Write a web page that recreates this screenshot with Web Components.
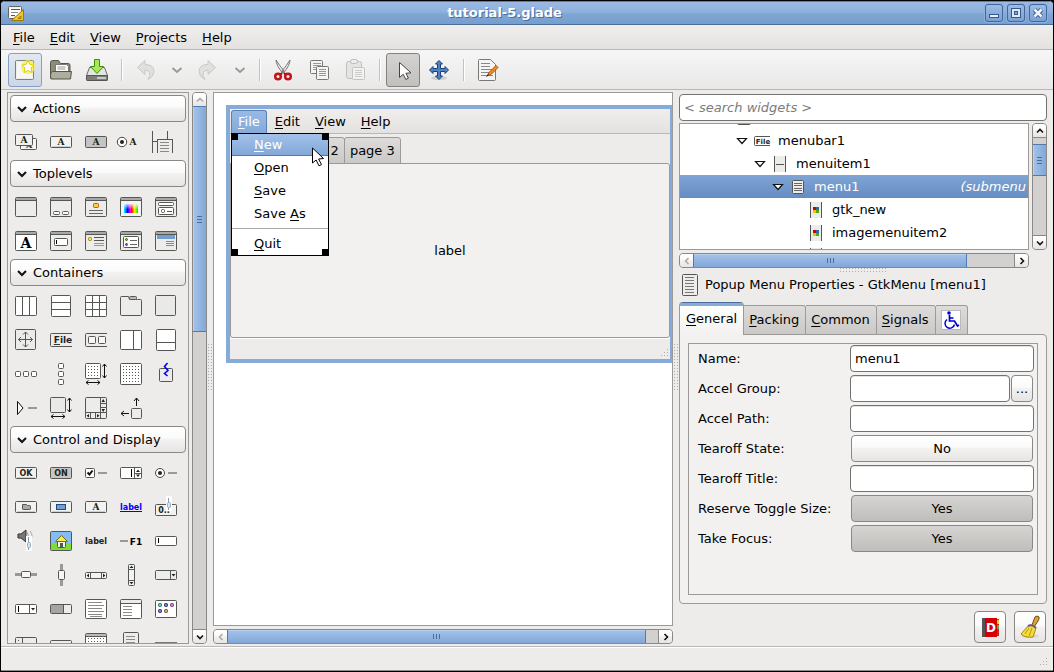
<!DOCTYPE html>
<html lang="en">
<head>
<meta charset="utf-8">
<title>tutorial-5.glade</title>
<style>
  html, body { margin: 0; height: 100%; }
  body {
    font: 13px/18px "DejaVu Sans", sans-serif;
    color: #000;
    background: #000;
    --bg: #edeceb;
    --page: #f2f1f0;
    --line: #bab8b6;
    --frame: #9c9a98;
    --btn: #8a8885;
    --blue: #86abd9;
    --blue-dark: #4a6d9c;
    --raised: linear-gradient(#fff, #fafafa 45%, #f3f2f1 50%, #e6e5e3);
    --pressed: linear-gradient(#d6d4d2, #c0bebb);
    --thumb: linear-gradient(#a5c3e8, #82a7d8);
    --thumb-v: linear-gradient(90deg, #a5c3e8, #82a7d8);
    --dots: conic-gradient(from 270deg at 1px 1px, #b0aeac 90deg, transparent 0) 0 0/3px 3px;
  }
</style>
</head>
<body>
<app-window>
  <title-bar slot="title">tutorial-5.glade</title-bar>
  <menu-bar slot="menu">
    <menu-entry><u>F</u>ile</menu-entry>
    <menu-entry><u>E</u>dit</menu-entry>
    <menu-entry><u>V</u>iew</menu-entry>
    <menu-entry><u>P</u>rojects</menu-entry>
    <menu-entry><u>H</u>elp</menu-entry>
  </menu-bar>
  <tool-bar slot="tools">
    <tool-button icon="new" label="New" kind="hover"></tool-button>
    <tool-button icon="open" label="Open"></tool-button>
    <tool-button icon="save" label="Save"></tool-button>
    <tool-separator></tool-separator>
    <tool-button icon="undo" label="Undo"></tool-button>
    <tool-button icon="down" label="Undo history" kind="narrow"></tool-button>
    <tool-button icon="redo" label="Redo"></tool-button>
    <tool-button icon="down" label="Redo history" kind="narrow"></tool-button>
    <tool-separator></tool-separator>
    <tool-button icon="cut" label="Cut"></tool-button>
    <tool-button icon="copy" label="Copy"></tool-button>
    <tool-button icon="paste" label="Paste"></tool-button>
    <tool-separator></tool-separator>
    <tool-button icon="pointer" label="Selector" kind="active"></tool-button>
    <tool-button icon="move" label="Drag and resize"></tool-button>
    <tool-separator></tool-separator>
    <tool-button icon="editdoc" label="Edit"></tool-button>
  </tool-bar>
  <widget-palette slot="palette">
    <palette-group heading="Actions" items="action toggle-off toggle-on radio-action recent"></palette-group>
    <palette-group heading="Toplevels" items="win dialog about color filechooser font inputdlg message recentdlg assistant"></palette-group>
    <palette-group heading="Containers" items="hbox vbox table notebook framebox align menubar toolbar hpaned vpaned hbbox vbbox layout fixed eventbox expander viewport scrolled alignment"></palette-group>
    <palette-group heading="Control and Display" items="okbtn onbtn check spin radio filebtn colorbtn fontbtn linkbtn scalebtn volume image labeltxt accel entry hscale vscale hscroll vscroll combo comboentry progress textview treeview iconview handle statusb calendar popmenu hsep"></palette-group>
  </widget-palette>
  <scroll-bar slot="palette-scroll" vertical before="0" thumb="224" after="298" dim></scroll-bar>
  <design-canvas slot="canvas"></design-canvas>
  <inspector-panel slot="inspector"></inspector-panel>
</app-window>

<script>
/* ---------- icon drawing helpers ---------- */
const S = '#555753';
const box = (x, y, w, h, fill = '#fff', stroke = S, rx = 1) =>
  `<rect x="${x + .5}" y="${y + .5}" width="${w - 1}" height="${h - 1}" rx="${rx}" fill="${fill}" stroke="${stroke}"/>`;
const fill = (x, y, w, h, c = S) => `<rect x="${x}" y="${y}" width="${w}" height="${h}" fill="${c}"/>`;
const txt = (x, y, s, size = 8, c = '#111', extra = '') =>
  `<text x="${x}" y="${y}" font-size="${size}" font-weight="bold" text-anchor="middle" fill="${c}" ${extra}>${s}</text>`;
const path = (d, c = S, f = 'none', w = 1) => `<path d="${d}" fill="${f}" stroke="${c}" stroke-width="${w}"/>`;
const win = (bg = '#ececec') => box(0, 1, 22, 20, bg) + fill(1, 2, 20, 2, '#a8a8a6') + fill(1, 4, 20, 1);
const rows = (x, w, ys, c = '#8a8a88') => ys.map(y => fill(x, y, w, 1, c)).join('');
const slab = (f = '#f2f2f0') => box(0, 5, 22, 12, f) + fill(2, 15, 18, 1, '#cfcfcc');
const arrowsHV = path('M19.5 1v14M17.5 3.5l2-2.5 2 2.5M17.5 12.5l2 2.5 2-2.5M1 19.5h14M3.5 17.5L1 19.5l2.5 2M12.5 17.5l2.5 2-2.5 2', '#111');
const dots = (n) => { let s = ''; for (let i = 0; i < n; i++) for (let j = 0; j < n; j++) s += fill(3 + 3 * i, 3 + 3 * j, 1, 1, '#555'); return s; };
const serif = 'font-family="DejaVu Serif, serif"';
const mono = 'font-family="DejaVu Sans, sans-serif"';
const A = (x, y) => txt(x, y, 'A', 9, '#1a1f10', serif);
const tri = (pts, c = '#222') => `<polygon points="${pts}" fill="${c}"/>`;
const pageMark = fill(0, 0, 1, 16) + fill(11, 0, 1, 16) + fill(1, 0, 10, 16, '#ececeb');
const squares = fill(3, 5, 3, 3, '#c00') + fill(6, 5, 3, 3, '#3465a4') + fill(3, 8, 3, 3, '#edc600') + fill(6, 8, 3, 3, '#4eae06');
const starPts = '12,0 14,4 18,4.500 15,7.500 16,12 12,10 8,12 9,7.500 6,4.500 10,4';

const ICONS = {
  /* toolbar, 24 x 24 */
  app: [16, 16, box(0, 1, 14, 13, '#f4f4ee', '#66665c') + fill(2, 3, 10, 8, '#fff') + fill(3, 4, 9, 1, '#555') + fill(3, 7, 7, 1, '#888') + fill(3, 10, 4, 1, '#555') + path('M15.500 4.500v11h-12z', '#a07800', '#f0c22c') + path('M13 11v2.500h-3z', '#a07800', '#f8e48c')],
  new: [24, 24, box(2, 2, 19, 20, '#eeeeec', '#7c7e7a') + fill(4, 4, 15, 16, '#f6f6f5') + '<circle cx="15" cy="9" r="7" fill="#f5ee50" opacity=".75"/>' + `<polygon transform="translate(3 2.500)" points="${starPts}" fill="#fff" stroke="#e3cf00"/>`],
  open: [24, 24, path('M1.500 20V4.500q0-2 2-2h6l2 3h8q1.500 0 1.500 2V20z', '#55574c', '#8b8d7c') + path('M6.500 13V6.500h11l2 2V13', '#7a7a72', '#fff') + path('M8.500 9h8M8.500 11h8', '#999') + path('M3.500 13.500h19l-1 7.500h-19.500q-1.500-6 1.500-7.500z', '#55574c', '#adae9e')],
  save: [24, 24, path('M4.500 9.500h15l3 8v4q0 1-1 1h-19q-1 0-1-1v-4z', '#6b6d69', '#e4e4e2') + path('M1.500 17.500h21v4q0 1-1 1h-19q-1 0-1-1z', '#555', '#7c7e7a') + fill(12, 19, 9, 2, '#c8c8c4') + path('M9.500 1.500h5v7h4l-6.500 7-6.500-7h4z', '#3f8f06', '#a6e858')],
  undo: [24, 24, path('M12 2.500v4q9 0 9 7 0 5-6 8 3-4 1.500-7-1-2.500-4.500-2.500v4.500L4.500 9.500z', '#c8c8c4', '#e0e0dd')],
  redo: [24, 24, path('M12 2.500v4q-9 0-9 7 0 5 6 8-3-4-1.500-7 1-2.500 4.500-2.500v4.500L19.500 9.500z', '#c8c8c4', '#e0e0dd')],
  down: [12, 12, path('M1.500 4l4.500 4 4.500-4', '#9a9a98', 'none', 2)],
  cut: [24, 24, path('M5 2q0 5 6.500 13l1.500-2Q8 7 5 2zM19 2q0 5-6.500 13l-1.500-2Q16 7 19 2z', '#777', '#eee') + path('M11 15l-2 2M13 15l2 2', '#a00', 'none', 2) + '<circle cx="7" cy="18.500" r="2.800" fill="none" stroke="#c4121a" stroke-width="2.500"/><circle cx="17" cy="18.500" r="2.800" fill="none" stroke="#c4121a" stroke-width="2.500"/>'],
  copy: [24, 24, box(3, 2, 13, 14, '#f4f4f3', '#777975') + rows(6, 8, [5, 7, 9, 11], '#999') + box(9, 8, 13, 14, '#f4f4f3', '#777975') + rows(12, 7, [11, 13, 15, 17], '#999')],
  paste: [24, 24, box(3, 3, 16, 18, '#e4e4e2', '#c0c0bc', 2) + box(7, 1, 8, 5, '#eee', '#bbb', 2) + box(9, 9, 13, 13, '#f2f2f1', '#c4c4c0') + rows(12, 7, [12, 14, 16, 18], '#ccc')],
  pointer: [24, 24, path('M8.500 4.500v15l3.700-3.200 2.600 5.200 2.600-1.300-2.500-4.900 5.100-.5z', '#444', '#fff')],
  move: [24, 24, '<ellipse cx="12" cy="20" rx="8" ry="2" fill="#bbb" opacity=".6"/>' + path('M12 2.500l3.500 3.500h-2v4.500H18v-2l3.500 3.500-3.500 3.500v-2h-4.500V18h2L12 21.500 8.500 18h2v-4.500H6v2L2.500 12 6 8.500v2h4.500V6h-2z', '#1c4078', '#4b82c4')],
  editdoc: [24, 24, path('M3.500 2.500q0-1 1-1h11l5 5v15q0 1-1 1h-15q-1 0-1-1z', '#777975', '#f4f4f2') + rows(6, 9, [5, 8], '#888') + rows(6, 12, [11, 14, 17], '#888') + path('M12 18l2-3.500 7-7 2 2-7 7z', '#b34d00', '#f78e1e') + path('M11.500 18.500l2-2', '#222')],
  /* title buttons */
  wmin: [10, 10, box(0, 6, 10, 4, '#e8f0fb', '#35598f', 0)],
  wmax: [10, 10, box(0, 0, 10, 10, '#dde8f8', '#35598f', 0) + box(3, 3, 4, 4, '#86abd9', '#35598f', 0)],
  wclose: [10, 10, path('M1.500 1.500l7 7M8.500 1.500l-7 7', '#35598f', 'none', 4.500) + path('M1.500 1.500l7 7M8.500 1.500l-7 7', '#eef4fd', 'none', 2.500)],
  /* arrows */
  aup: [8, 8, path('M1 5.500l3-3 3 3', 'currentColor', 'none', 1.600)],
  adown: [8, 8, path('M1 2.500l3 3 3-3', 'currentColor', 'none', 1.600)],
  aleft: [8, 8, path('M5.500 1l-3 3 3 3', 'currentColor', 'none', 1.600)],
  aright: [8, 8, path('M2.500 1l3 3-3 3', 'currentColor', 'none', 1.600)],
  chevron: [12, 12, path('M2 4l4 4 4-4', '#111', 'none', 2)],
  /* palette, 22 x 22 */
  action: [22, 22, box(5, 7, 17, 12, '#f4f4f2') + txt(14, 17, 'A', 8, '#333', serif) + box(0, 3, 18, 12, '#f0f0ee') + A(9, 12)],
  'toggle-off': [22, 22, slab() + A(11, 14)],
  'toggle-on': [22, 22, box(0, 5, 22, 12, '#c4c4c4') + A(11, 14)],
  'radio-action': [22, 22, '<circle cx="2" cy="11" r="4.700" fill="#fff" stroke="#444"/><circle cx="2" cy="11" r="2" fill="#222"/>' + A(13, 14)],
  recent: [22, 22, fill(-3, 0, 1, 22) + fill(-2, 10, 5, 1) + fill(12, 0, 1, 8) + fill(2, 8, 1, 14) + fill(2, 8, 16, 1) + fill(17, 8, 1, 14) + rows(5, 9, [11, 14, 17, 20])],
  win: [22, 22, win()],
  dialog: [22, 22, win() + box(3, 15, 7, 4) + box(12, 15, 7, 4)],
  about: [22, 22, win() + box(8, 7, 6, 5, '#ffd040', '#c85000') + rows(4, 14, [14, 17], '#666')],
  color: [22, 22, win('#f4f4f4') + '<defs><linearGradient id="r"><stop offset="0" stop-color="#0ff"/><stop offset=".25" stop-color="#00f"/><stop offset=".45" stop-color="#f0f"/><stop offset=".55" stop-color="#f00"/><stop offset=".75" stop-color="#fe0"/><stop offset="1" stop-color="#0e0"/></linearGradient><linearGradient id="w" x2="0" y2="1"><stop offset="0" stop-color="#fff" stop-opacity=".8"/><stop offset=".6" stop-color="#fff" stop-opacity="0"/></linearGradient></defs>' + fill(4, 8, 14, 9, 'url(#r)') + fill(4, 8, 14, 9, 'url(#w)')],
  filechooser: [22, 22, win() + box(3, 6, 16, 4) + box(3, 11, 16, 8) + box(6, 13, 4, 4) + fill(12, 15, 5, 1)],
  font: [22, 22, win('#fff') + txt(11, 18, 'A', 14, '#000', serif)],
  inputdlg: [22, 22, win() + box(4, 8, 14, 8) + fill(6, 10, 1, 4, '#000')],
  message: [22, 22, win() + box(3, 7, 4, 4, '#fce94f', '#a08000') + rows(9, 10, [7, 10], '#555') + rows(9, 10, [13, 15], '#999')],
  recentdlg: [22, 22, win() + box(3, 6, 16, 12) + box(5, 8, 3, 3, '#7c0', '#360') + box(5, 13, 3, 3, '#a4c', '#536') + rows(10, 7, [10, 14], '#666')],
  assistant: [22, 22, win() + fill(2, 5, 18, 4, '#729fcf') + rows(11, 8, [11, 13, 15])],
  hbox: [22, 22, box(0, 1, 22, 20) + fill(7, 2, 1, 18) + fill(14, 2, 1, 18)],
  vbox: [22, 22, box(1, 0, 20, 22) + fill(2, 7, 18, 1) + fill(2, 14, 18, 1)],
  table: [22, 22, box(0, 0, 22, 22) + fill(7, 1, 1, 20) + fill(14, 1, 1, 20) + fill(1, 7, 20, 1) + fill(1, 14, 20, 1)],
  notebook: [22, 22, path('M.5 19V2.500q0-1 1-1h7l1 3h6l2 0h3q1 0 1 1V19q0 1.500-1 1.500h-19q-1 0-1-1.500z', S, '#ececeb') + box(9, 1, 8, 4, '#b8b8b8')],
  framebox: [22, 22, box(0, 0, 21, 21, '#e9e9e8')],
  align: [22, 22, box(0, 0, 21, 21, '#ebebea') + path('M3.500 10.500h14M10.500 3v15M8 5.500l2.500-2.500L13 5.500M8 15.500l2.500 2.500 2.500-2.500M6 8l-2.500 2.500L6 13M15 8l2.500 2.500L15 13')],
  menubar: [22, 22, path('M22 4.500H1.500q-1 0-1 1v11q0 1 1 1H22') + txt(13, 14, '<tspan text-decoration="underline">F</tspan>ile', 9, '#222', mono)],
  toolbar: [22, 22, path('M22 4.500H1.500q-1 0-1 1v11q0 1 1 1H22') + box(3, 7, 8, 8, '#f6f6f6') + box(13, 7, 8, 8, '#f6f6f6')],
  hpaned: [22, 22, box(0, 1, 22, 20) + fill(13, 2, 1, 18)],
  vpaned: [22, 22, box(1, 0, 20, 22) + fill(2, 13, 18, 1)],
  hbbox: [22, 22, box(0, 8, 6, 6) + box(8, 8, 6, 6) + box(16, 8, 6, 6)],
  vbbox: [22, 22, box(8, 0, 6, 6) + box(8, 8, 6, 6) + box(8, 16, 6, 6)],
  layout: [22, 22, box(0, 0, 16, 16) + dots(4) + arrowsHV],
  fixed: [22, 22, box(0, 0, 22, 22) + dots(6)],
  eventbox: [22, 22, box(4, 5, 14, 14, '#ececeb') + path('M12.500 0l-3 3.500 3.500 4-3.500 3 3 2.500', '#00f', 'none', 1.600)],
  expander: [22, 22, path('M2.500 4.500l5.500 6.500-5.500 6.500z', '#111', '#fff') + fill(13, 10, 9, 2, '#999')],
  viewport: [22, 22, box(0, 0, 16, 16, '#e9e9e8') + arrowsHV],
  scrolled: [22, 22, box(0, 0, 22, 22, '#ececeb') + fill(15, 1, 1, 20) + fill(1, 15, 20, 1) + fill(15, 6, 6, 1) + fill(15, 10, 6, 1) + fill(5, 16, 1, 5) + fill(10, 16, 1, 5) + tri('16.500,5 20,5 18.200,2') + tri('16.500,12 20,12 18.200,15') + tri('4,17 4,20.500 1.500,18.700') + tri('12,17 12,20.500 14.500,18.700')],
  alignment: [22, 22, box(11, 11, 11, 11, '#ececeb') + path('M16.500 1v8M14 4l2.500-3L19 4M1 16.500h8M4 14l-3 2.500 3 2.500', '#111')],
  okbtn: [22, 22, slab() + txt(11, 14, 'OK', 8, '#222', mono)],
  onbtn: [22, 22, box(0, 5, 22, 12, '#c6c6c4') + txt(11, 14, 'ON', 8, '#222', mono)],
  check: [22, 22, box(0, 6, 10, 10) + path('M2.500 10.500l2 2 3-4', '#111', 'none', 2) + fill(13, 10, 9, 2, '#999')],
  spin: [22, 22, box(0, 5, 22, 12) + fill(11, 7, 1, 8, '#000') + fill(14, 6, 1, 10) + fill(15, 11, 6, 1) + tri('16,10 20,10 18,7.500') + tri('16,12.500 20,12.500 18,15')],
  radio: [22, 22, '<circle cx="5" cy="11" r="4.500" fill="#fff" stroke="#444"/><circle cx="5" cy="11" r="2" fill="#222"/>' + fill(13, 10, 9, 2, '#999')],
  filebtn: [22, 22, slab() + path('M7.500 13V8.500h4l1 1h2q1 0 1 1V13q0 .5-1 .5H8.500q-1 0-1-.5z', S, '#aaa')],
  colorbtn: [22, 22, slab() + box(6, 8, 10, 6, '#729fcf', '#204a87', 0)],
  fontbtn: [22, 22, slab() + A(11, 14)],
  linkbtn: [22, 22, txt(11, 14, 'label', 8, '#00f', mono) + fill(0, 15, 22, 1, '#00f')],
  scalebtn: [22, 22, box(0, 8, 22, 12, '#f2f2f0') + txt(9, 17, '0..', 8, '#222', mono) + fill(11, 0, 6, 15, '#fff') + fill(13, 2, 1, 12, '#89b') + box(12, 6, 4, 6, '#d5e4f4', '#9ab')],
  volume: [22, 22, path('M3 4h3l5-4v12l-5-4H3z', '#333', '#777') + path('M12 2q3 4 0 8M15 1q4 5 0 9', '#a9a4b4') + fill(11, 6, 6, 15, '#fff') + fill(13, 7, 1, 13, '#89b') + box(12, 12, 4, 6, '#d5e4f4', '#9ab')],
  image: [22, 22, box(0, 1, 22, 20, '#84bdf5') + fill(1, 13, 20, 7, '#7fdc35') + box(7, 10, 9, 8, '#f3f3ee') + path('M5.500 11.500l6-6 6 6z', '#7a6a10', '#fce94f') + fill(10, 13, 3, 4)],
  labeltxt: [22, 22, txt(11, 14, 'label', 8, '#222', mono)],
  accel: [22, 22, fill(0, 10, 8, 2, '#999') + txt(16, 15, 'F1', 9, '#000', mono)],
  entry: [22, 22, box(0, 6, 22, 10) + fill(3, 8, 1, 5, '#000')],
  hscale: [22, 22, fill(0, 9, 22, 3, '#999') + box(6, 7, 10, 7, '#f6f6f6')],
  vscale: [22, 22, fill(10, 0, 3, 22, '#999') + box(8, 6, 7, 10, '#f6f6f6')],
  hscroll: [22, 22, box(0, 8, 22, 7, '#f4f4f4') + fill(5, 9, 1, 5) + fill(16, 9, 1, 5) + tri('4,9.500 4,13.500 1.700,11.500') + tri('18,9.500 18,13.500 20.300,11.500')],
  vscroll: [22, 22, box(8, 0, 7, 22, '#f4f4f4') + fill(9, 5, 5, 1) + fill(9, 16, 5, 1) + tri('9.500,4 13.500,4 11.500,1.700') + tri('9.500,18 13.500,18 11.500,20.300')],
  combo: [22, 22, box(0, 6, 22, 10, '#ececeb') + fill(15, 7, 1, 8) + tri('16.500,10 20.500,10 18.500,12.500')],
  comboentry: [22, 22, box(0, 6, 22, 10) + fill(3, 8, 1, 6, '#000') + fill(14, 7, 1, 8) + tri('16,10 20,10 18,12.500')],
  progress: [22, 22, box(0, 6, 22, 10, '#ececeb') + fill(1, 7, 12, 8, '#a4a4a4') + fill(13, 7, 1, 8)],
  textview: [22, 22, box(0, 1, 22, 20) + rows(3, 14, [4, 10, 16]) + rows(3, 16, [7, 13]) + rows(5, 12, [18])],
  treeview: [22, 22, box(0, 1, 22, 20) + fill(1, 5, 20, 1) + fill(1, 2, 20, 3, '#ececeb') + rows(3, 9, [8, 11, 14, 17])],
  iconview: [22, 22, box(0, 2, 22, 18) + box(3, 5, 4, 4, '#5cc', '#266') + box(9, 5, 4, 4, '#68c', '#225') + box(15, 5, 4, 4, '#c8c', '#636') + box(3, 11, 4, 4, '#77d', '#226') + box(9, 11, 4, 4, '#ca7', '#642')],
  handle: [22, 22, box(0, 5, 22, 16, '#ececeb') + fill(7, 6, 1, 14) + fill(3, 8, 1, 1) + fill(3, 11, 1, 1)],
  statusb: [22, 22, box(0, 8, 22, 8, '#ececeb')],
  calendar: [22, 22, win('#fff') + dots(6) + fill(1, 2, 20, 2, '#bbb')],
  popmenu: [22, 22, box(3, 0, 16, 22, '#ececeb') + rows(6, 9, [4, 7, 10, 13])],
  hsep: [22, 22, fill(0, 10, 22, 2, '#777')],
  /* object tree, 16 x 16 */
  't-menubar': [16, 16, path('M16 3.500H1.500q-1 0-1 1v7q0 1 1 1H16') + txt(9, 11, 'File', 7, '#222', mono)],
  't-item': [16, 16, `<g transform="translate(2 0)">${pageMark}${fill(2, 8, 8, 1)}</g>`],
  't-menu': [16, 16, box(2, 1, 12, 14, '#ececeb') + rows(4, 8, [4, 6, 9, 11], '#666')],
  't-image': [16, 16, `<g transform="translate(2 0)">${pageMark}${squares}</g>`],
  't-box': [16, 16, box(1, 0, 14, 15)],
  expanded: [12, 12, path('M1.500 3.500h9L6 8.500z', '#111', '#fff', 1.200)],
  pagebig: [16, 22, box(0, 0, 16, 22, '#ececeb') + rows(3, 9, [3, 6, 9, 12, 15, 18], '#777')],
  access: [20, 20, box(0, 0, 20, 20, '#fff', '#bbb', 0) + '<circle cx="8" cy="3" r="1.800" fill="#00c"/>' + path('M8.500 5v6h5l3 5 1.500-1M8.500 8h4', '#00c', 'none', 1.700) + path('M6 9.500a4.800 4.800 0 1 0 7.500 5', '#00c', 'none', 1.500)],
  dict: [20, 20, fill(15, 2, 4, 17, '#c22') + fill(15, 3, 4, 4, '#e8c838') + fill(15, 8, 4, 4, '#5a5') + fill(3, 1, 14, 19, '#d40000') + fill(2, 1, 3, 19, '#555') + txt(11, 15, 'D', 12, '#fff', mono)],
  broom: [24, 24, '<ellipse cx="12" cy="21" rx="9" ry="2" fill="#ccc" opacity=".6"/>' + path('M14 10l3-8q2-2 4 0 .5 2-1 4l-4 6z', '#6b4a10', '#d9a441') + path('M10 11q4-3 8 2l-3 9q-8 1-12-3z', '#a68b00', '#f4dc3c') + path('M11 13l-4 6M14 13l-3 8', '#b79a00') + path('M10 11q4-2 8 2', '#6a5a9a', 'none', 2)],
  cursor: [14, 20, path('M1.500 1v15l3.600-3 2.900 5.800 2.500-1.200-2.900-5.600 4.900-.5z', '#000', '#fff')]
};

/* ---------- element factory ---------- */
function define(tag, css, html, setup) {
  const tpl = document.createElement('template');
  tpl.innerHTML = `<style>*{box-sizing:border-box}button,input{font:inherit;color:inherit;margin:0;padding:0}u,::slotted(u){text-decoration:underline;text-decoration-thickness:1px;text-underline-offset:2px}${css}</style>${html}`;
  customElements.define(tag, class extends HTMLElement {
    constructor() {
      super();
      this.attachShadow({ mode: 'open' });
    }
    connectedCallback() {
      if (this.shadowRoot.childNodes.length) return;
      this.shadowRoot.append(tpl.content.cloneNode(true));
      if (setup) setup(this, this.shadowRoot);
    }
  });
}

define('ui-icon', `:host{display:block;flex:none;line-height:0}svg{display:block;overflow:visible}`, ``, (el, root) => {
  const [w, h, body] = ICONS[el.getAttribute('name')];
  root.innerHTML += `<svg width="${w}" height="${h}" viewBox="0 0 ${w} ${h}" aria-hidden="true">${body}</svg>`;
});

define('app-window', `
  :host{display:flex;flex-direction:column;box-sizing:border-box;height:100vh;border:1px solid #000;border-radius:5px 5px 0 0;background:var(--bg);overflow:hidden}
  main{flex:1;min-height:0;display:grid;grid-template-columns:182px 15px minmax(0,1fr) 368px;column-gap:6px;padding:2px 6px}
  main{grid-template-columns:200px minmax(0,1fr) 368px}
  .pal,.center,.right{min-height:0;min-width:0;display:flex;position:relative}
  .pal{gap:3px}
  .grip{position:absolute;left:-5px;top:252px;width:5px;height:46px;background:var(--dots)}
  footer{flex:none;height:25px;border-top:1px solid var(--line);box-shadow:inset 0 1px #fff,inset 0 -1px #8f8e8c;display:flex;justify-content:flex-end;align-items:flex-end;padding:0 5px 5px}
  .size{width:11px;height:11px;background:var(--dots);clip-path:polygon(100% 0,100% 100%,0 100%)}`, `
  <slot name="title"></slot><slot name="menu"></slot><slot name="tools"></slot>
  <main>
    <div class="pal"><slot name="palette"></slot><slot name="palette-scroll"></slot></div>
    <div class="center"><div class="grip"></div><slot name="canvas"></slot></div>
    <div class="right"><div class="grip"></div><slot name="inspector"></slot></div>
  </main>
  <footer><div class="size"></div></footer>`);

define('title-bar', `
  :host{display:flex;align-items:center;gap:4px;flex:none;height:24px;box-sizing:border-box;padding:0 6px 0 7px;border-top:1px solid #5a7fb4;border-bottom:1px solid var(--blue-dark);background:linear-gradient(#9cb9e4,#8fb0dd 45%,#7fa6d3 55%,#769ecd)}
  h1{flex:1;margin:0;text-align:center;font:bold 13px/18px "DejaVu Sans",sans-serif;color:#fff;text-shadow:1px 1px #4a6d9c}
  button{width:18px;height:18px;border:1px solid #41659c;border-radius:3px;background:linear-gradient(#9dbbe5,#7aa1d3);display:flex;align-items:center;justify-content:center;box-shadow:0 0 0 1px #8fb0dd}`,
  `<ui-icon name="app"></ui-icon><h1><slot></slot></h1>
  <button aria-label="Minimize"><ui-icon name="wmin"></ui-icon></button>
  <button aria-label="Maximize"><ui-icon name="wmax"></ui-icon></button>
  <button aria-label="Close"><ui-icon name="wclose"></ui-icon></button>`);

define('menu-bar', `
  :host{display:flex;gap:1px;flex:none;box-sizing:border-box;height:25px;padding:0 5px;border-bottom:1px solid var(--line);background:linear-gradient(#efeeed,#e3e2e0)}
  :host([inner]){padding:1px 1px 0}`, `<slot></slot>`);

define('menu-entry', `
  :host{display:flex}
  button{border:1px solid transparent;border-bottom:0;border-radius:3px 3px 0 0;background:none;padding:0 6px;line-height:20px}
  :host([selected]) button{background:linear-gradient(#98b9e5,#86abd9);border-color:#5a80b5;color:#fff}`,
  `<button><slot></slot></button>`);

define('tool-bar', `
  :host{display:flex;align-items:center;gap:2px;flex:none;box-sizing:border-box;height:40px;padding:0 7px;border-bottom:1px solid var(--line);background:linear-gradient(#f7f6f6,#e9e8e7)}`, `<slot></slot>`);

define('tool-button', `
  :host{display:block}
  button{width:34px;height:34px;display:flex;align-items:center;justify-content:center;border:1px solid transparent;border-radius:3px;background:none}
  button.narrow{width:25px}
  button.hover{border-color:#84a0c6;background:linear-gradient(#e3e8f0,#cdd6e4)}
  button.active{border-color:#84827f;background:linear-gradient(#d5d3d1,#c2c0bd)}`,
  `<button></button>`, (el, root) => {
    const b = root.querySelector('button');
    b.className = el.getAttribute('kind') || '';
    b.setAttribute('aria-label', el.getAttribute('label'));
    b.innerHTML = `<ui-icon name="${el.getAttribute('icon')}"></ui-icon>`;
  });

define('tool-separator', `:host{display:flex;justify-content:center;width:10px}i{width:1px;height:22px;background:#c4c2c0;box-shadow:1px 0 #fff}`, `<i></i>`);

define('widget-palette', `:host{display:block;flex:1;min-height:0;box-sizing:border-box;overflow:hidden;border:1px solid var(--frame);padding:2px;background:var(--bg)}`, `<slot></slot>`);

define('palette-group', `
  :host{display:block}
  .head{width:100%;height:27px;display:flex;align-items:center;gap:5px;padding:0 5px;border:1px solid var(--btn);border-radius:4px;background:var(--raised);text-align:left}
  .items{display:grid;grid-template-columns:repeat(5,35px);grid-auto-rows:34px;padding:3px 0 1px 5px}
  .items button{display:flex;align-items:center;border:0;background:none}`,
  `<button class="head" aria-expanded="true"><ui-icon name="chevron"></ui-icon><span></span></button><div class="items"></div>`, (el, root) => {
    root.querySelector('span').textContent = el.getAttribute('heading');
    root.querySelector('.items').innerHTML = el.getAttribute('items').split(' ')
      .map(n => `<button aria-label="${n}"><ui-icon name="${n}"></ui-icon></button>`).join('');
  });

define('scroll-bar', `
  :host{display:flex;flex:1;flex-direction:row;box-sizing:border-box;height:15px;border:1px solid var(--btn);border-radius:4px;background:#d3d1cf;overflow:hidden}
  :host([vertical]){flex:none;flex-direction:column;width:15px;height:auto}
  button{flex:none;width:14px;height:13px;border:0;border-right:1px solid var(--btn);background:var(--raised);display:flex;align-items:center;justify-content:center;color:#111}
  button:last-of-type{border-right:0;border-left:1px solid var(--btn)}
  :host([vertical]) button{width:13px;height:14px;border:0;border-bottom:1px solid var(--btn)}
  :host([vertical]) button:last-of-type{border:0;border-top:1px solid var(--btn)}
  :host([dim]) button:first-of-type{color:#aaa}
  .t{background:var(--thumb);display:flex;align-items:center;justify-content:center;box-shadow:1px 0 #4f7bb5,-1px 0 #4f7bb5,inset 0 1px #b9d1f0;z-index:1}
  :host([vertical]) .t{background:var(--thumb-v);box-shadow:0 1px #4f7bb5,0 -1px #4f7bb5,inset 1px 0 #b9d1f0}
  .t i{width:7px;height:5px;background:repeating-linear-gradient(90deg,#4a6d9c 0 1px,transparent 1px 3px)}
  :host([vertical]) .t i{width:5px;height:7px;background:repeating-linear-gradient(#4a6d9c 0 1px,transparent 1px 3px)}`,
  `<button aria-label="Back"></button><div class="b"></div><div class="t"><i></i></div><div class="a"></div><button aria-label="Forward"></button>`, (el, root) => {
    const v = el.hasAttribute('vertical');
    const [first, last] = root.querySelectorAll('button');
    first.innerHTML = `<ui-icon name="${v ? 'aup' : 'aleft'}"></ui-icon>`;
    last.innerHTML = `<ui-icon name="${v ? 'adown' : 'aright'}"></ui-icon>`;
    [['.b', 'before'], ['.t', 'thumb'], ['.a', 'after']].forEach(([s, a]) => {
      root.querySelector(s).style.flex = `${el.getAttribute(a)} 1 0`;
    });
  });

define('design-canvas', `
  :host{display:flex;flex-direction:column;gap:3px;flex:1;min-width:0}
  .view{flex:1;min-height:0;overflow:hidden;border:1px solid var(--frame);background:#fff;padding:12px 0 0 12px}
  .row{display:flex}`,
  `<div class="view"><preview-window></preview-window></div>
   <div class="row"><scroll-bar before="0" thumb="417" after="13" dim></scroll-bar></div>`);

define('preview-window', `
  :host{display:block;position:relative;margin-right:-2px;border:4px solid var(--blue);background:var(--bg)}
  .tabs{display:flex;align-items:flex-end;padding:3px 1px 0;height:30px}
  .tabs button{height:27px;padding:0 5px;border:1px solid var(--frame);border-radius:3px 3px 0 0;background:linear-gradient(#dddcda,#cbc9c7);margin-right:-1px}
  .tabs .first{width:58px;height:30px;background:var(--page);border-bottom:0}
  .page{margin:-1px 0 0;height:175px;display:flex;align-items:center;justify-content:center;border:1px solid var(--frame);border-radius:0 3px 3px 3px;background:var(--page)}
  .foot{height:21px;display:flex;justify-content:flex-end;align-items:flex-end;padding:0 1px 2px;border-top:1px solid #fff}
  .foot i{width:11px;height:11px;background:var(--dots);clip-path:polygon(100% 0,100% 100%,0 100%)}
  popup-menu{position:absolute;left:1px;top:24px}`,
  `<menu-bar inner>
    <menu-entry selected><u>F</u>ile</menu-entry><menu-entry><u>E</u>dit</menu-entry>
    <menu-entry><u>V</u>iew</menu-entry><menu-entry><u>H</u>elp</menu-entry>
  </menu-bar>
  <div class="tabs"><button class="first" aria-label="page 1"></button><button>page 2</button><button>page 3</button></div>
  <div class="page">label</div>
  <div class="foot"><i></i></div>
  <popup-menu></popup-menu>`);

define('popup-menu', `
  :host{display:block;width:98px;box-sizing:border-box;border:1px solid #000;background:#fff}
  button{display:block;width:100%;height:23px;padding:0 0 0 22px;border:0;background:none;text-align:left}
  button.on{height:22px;color:#fff;background:linear-gradient(#a3c1e8,#82a8d8);border-bottom:1px solid #5578a8}
  hr{margin:3px 0;border:0;border-top:1px solid #aaa}
  b{position:absolute;width:7px;height:7px;background:#000}
  .nw{left:-1px;top:-1px}.ne{right:-1px;top:-1px}.sw{left:-1px;bottom:-1px}.se{right:-1px;bottom:-1px}
  ui-icon{position:absolute;left:79px;top:13px}`,
  `<button class="on"><u>N</u>ew</button><button><u>O</u>pen</button><button><u>S</u>ave</button><button>Save <u>A</u>s</button><hr><button><u>Q</u>uit</button>
   <b class="nw"></b><b class="ne"></b><b class="sw"></b><b class="se"></b>
   <ui-icon name="cursor"></ui-icon>`);

define('tree-row', `
  :host{display:flex;align-items:center;box-sizing:border-box;height:23px;flex:none;padding-right:2px;white-space:nowrap}
  :host([selected]){background:linear-gradient(#7fa5d6,#668dc2);color:#fff}
  .x{width:12px;margin-right:6px}
  .n{margin-left:8px}
  em{margin-left:auto}`,
  `<span class="x"></span><span class="i"></span><span class="n"></span><em></em>`, (el, root) => {
    el.style.paddingLeft = 56 + 18 * el.getAttribute('level') + 'px';
    if (!el.hasAttribute('leaf')) root.querySelector('.x').innerHTML = '<ui-icon name="expanded"></ui-icon>';
    root.querySelector('.i').innerHTML = `<ui-icon name="${el.getAttribute('icon')}"></ui-icon>`;
    root.querySelector('.n').textContent = el.getAttribute('label') || '';
    root.querySelector('em').textContent = el.getAttribute('note') || '';
  });

define('object-tree', `
  :host{display:grid;grid-template-columns:minmax(0,1fr) 15px;gap:3px}
  .list{height:127px;overflow:hidden;border:1px solid var(--frame);background:#fff}
  .inner{margin-top:-18px}`,
  `<div class="list"><div class="inner">
    <tree-row level="-1" leaf icon="t-box"></tree-row>
    <tree-row level="0" icon="t-menubar" label="menubar1"></tree-row>
    <tree-row level="1" icon="t-item" label="menuitem1"></tree-row>
    <tree-row level="2" icon="t-menu" label="menu1" note="(submenu" selected></tree-row>
    <tree-row level="3" leaf icon="t-image" label="gtk_new"></tree-row>
    <tree-row level="3" leaf icon="t-image" label="imagemenuitem2"></tree-row>
    <tree-row level="3" leaf icon="t-image"></tree-row>
  </div></div>
  <scroll-bar vertical before="7" thumb="30" after="60"></scroll-bar>
  <scroll-bar before="0" thumb="272" after="48" dim></scroll-bar>`);

define('property-row', `
  :host{display:grid;grid-template-columns:minmax(0,1fr) 184px;align-items:center}
  .f{display:flex;gap:1px}
  input{flex:1;min-width:0;height:27px;padding:0 4px;border:1px solid #74726f;border-radius:4px;background:#fff;outline:0;box-shadow:inset 0 1px #e4e3e2}
  button{flex:1;height:27px;margin:0 1px;border:1px solid var(--btn);border-radius:4px;background:var(--raised)}
  button.on{background:var(--pressed)}
  button.more{flex:none;width:22px;margin-left:0}`,
  `<label for="v"></label><div class="f"></div>`, (el, root) => {
    const a = n => el.getAttribute(n);
    root.querySelector('label').textContent = a('label');
    root.querySelector('.f').innerHTML = el.hasAttribute('toggle')
      ? `<button id="v" aria-pressed="${a('toggle') === 'Yes'}" class="${a('toggle') === 'Yes' ? 'on' : ''}">${a('toggle')}</button>`
      : `<input id="v" type="text" value="${a('value') || ''}">${el.hasAttribute('more') ? '<button class="more">...</button>' : ''}`;
  });

define('inspector-panel', `
  :host{display:flex;flex-direction:column;flex:1;min-width:0;padding-top:2px}
  .search{flex:none;height:27px;margin-bottom:2px;padding:0 4px;border:1px solid #74726f;border-radius:4px;background:#fff;outline:0;width:100%}
  .search::placeholder{color:#7b7b7b;font-style:italic;opacity:1}
  .grip{align-self:center;width:46px;height:6px;background:var(--dots)}
  h2{display:flex;align-items:center;gap:7px;height:22px;margin:0 0 6px;padding-left:3px;font-size:13px;font-weight:normal}
  nav{display:flex;align-items:flex-end;flex:none;height:33px}
  nav button{height:30px;padding:0 6px 0 5px;border:1px solid var(--frame);border-left-width:0;border-radius:0 3px 0 0;background:linear-gradient(#dddcda,#cbc9c7)}
  nav button.on{height:33px;padding:1px 6px 0;border:1px solid var(--frame);border-width:0 1px;border-radius:4px 4px 0 0;background:linear-gradient(#4a6d9c 0 1px,#86abd9 1px 4px,#fff 4px,var(--page));z-index:1}
  .body{flex:1;min-height:0;margin-top:-1px;padding:8px;border:1px solid var(--frame);border-radius:0 4px 4px 4px;background:var(--page)}
  .frame{height:100%;display:flex;flex-direction:column;gap:3px;border:1px solid var(--frame);padding:1px 3px 0 9px}
  .acts{flex:none;display:flex;justify-content:flex-end;gap:8px;padding:7px 1px 1px 0}
  .acts button{width:32px;height:32px;display:flex;align-items:center;justify-content:center;border:1px solid var(--btn);border-radius:4px;background:var(--raised)}`,
  `<input class="search" type="text" aria-label="Search widgets" placeholder="&lt; search widgets &gt;">
  <object-tree></object-tree>
  <div class="grip"></div>
  <h2><ui-icon name="pagebig"></ui-icon>Popup Menu Properties - GtkMenu [menu1]</h2>
  <nav>
    <button class="on"><u>G</u>eneral</button><button><u>P</u>acking</button><button><u>C</u>ommon</button><button><u>S</u>ignals</button><button aria-label="Accessibility"><ui-icon name="access"></ui-icon></button>
  </nav>
  <div class="body"><div class="frame">
    <property-row label="Name:" value="menu1"></property-row>
    <property-row label="Accel Group:" more></property-row>
    <property-row label="Accel Path:"></property-row>
    <property-row label="Tearoff State:" toggle="No"></property-row>
    <property-row label="Tearoff Title:"></property-row>
    <property-row label="Reserve Toggle Size:" toggle="Yes"></property-row>
    <property-row label="Take Focus:" toggle="Yes"></property-row>
  </div></div>
  <div class="acts"><button aria-label="Documentation"><ui-icon name="dict"></ui-icon></button><button aria-label="Clear"><ui-icon name="broom"></ui-icon></button></div>`);
</script>
</body>
</html>
